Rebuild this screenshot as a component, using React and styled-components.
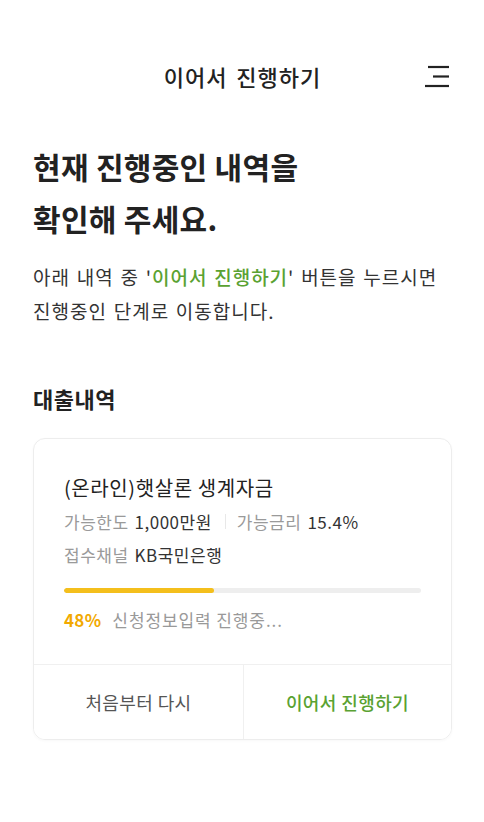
import React from "react";
import styled, { createGlobalStyle } from "styled-components";

const GlobalStyle = createGlobalStyle`
  html, body {
    margin: 0;
    padding: 0;
    background: #fff;
  }
  body {
    font-family: "Noto Sans CJK KR", "Noto Sans", sans-serif;
    color: #222;
    -webkit-font-smoothing: antialiased;
  }
`;

const Page = styled.div`
  width: 484px;
  min-height: 822px;
  box-sizing: border-box;
  padding: 48px 32px 40px 33px;
`;

const Header = styled.header`
  position: relative;
  height: 56px;
  display: flex;
  align-items: center;
  justify-content: center;
`;

const HeaderTitle = styled.h1`
  margin: 0;
  font-size: 22px;
  font-weight: 500;
  color: #222;
  letter-spacing: 1px;
  word-spacing: 3px;
`;

const MenuButton = styled.button`
  position: absolute;
  right: 1px;
  top: 16px;
  width: 28px;
  height: 28px;
  padding: 0;
  border: 0;
  background: none;
  cursor: pointer;
`;

const Heading = styled.h2`
  margin: 36px 0 0;
  font-size: 30px;
  line-height: 52px;
  font-weight: 700;
  color: #222;
  letter-spacing: 0.3px;
`;

const Lead = styled.p`
  margin: 16px 0 0;
  font-size: 19px;
  line-height: 34px;
  color: #333;
  letter-spacing: 1px;
  word-spacing: 1.5px;
`;

const Highlight = styled.span`
  color: #5aa232;
  font-weight: 500;
`;

const SectionTitle = styled.h3`
  margin: 55px 0 0;
  font-size: 22px;
  line-height: 30px;
  font-weight: 700;
  color: #222;
  letter-spacing: 0.5px;
`;

const Card = styled.section`
  margin-top: 25px;
  border: 1px solid #ededed;
  border-radius: 12px;
  box-shadow: 0 1px 3px rgba(0, 0, 0, 0.03);
  overflow: hidden;
`;

const CardBody = styled.div`
  padding: 35px 30px 31px 30px;
`;

const LoanName = styled.div`
  font-size: 20px;
  line-height: 28px;
  color: #222;
  letter-spacing: 0.6px;
  margin-bottom: 3px;
`;

const InfoRow = styled.div`
  display: flex;
  align-items: center;
  font-size: 17px;
  line-height: 33px;
  letter-spacing: 0.5px;
`;

const Label = styled.span`
  color: #9a9a9a;
  margin-right: 6px;
`;

const Value = styled.span`
  color: #333;
`;

const Sep = styled.span`
  width: 1px;
  height: 15px;
  background: #e8e8e8;
  margin: 0 11px 0 13px;
`;

const Track = styled.div`
  margin-top: 17px;
  height: 5px;
  border-radius: 3px;
  background: #eeeeee;
  overflow: hidden;
`;

const Fill = styled.div`
  height: 100%;
  border-radius: 3px;
  background: #f4bf1c;
`;

const Status = styled.div`
  margin-top: 14px;
  display: flex;
  align-items: center;
  font-size: 17px;
  line-height: 26px;
  letter-spacing: 0.9px;
`;

const Percent = styled.span`
  color: #f2a900;
  font-weight: 700;
  letter-spacing: 0.3px;
  margin-right: 11px;
`;

const StatusText = styled.span`
  color: #999;
`;

const Actions = styled.div`
  display: grid;
  grid-template-columns: 209px 1fr;
  border-top: 1px solid #f0f0f0;
`;

const ActionButton = styled.button`
  height: 74px;
  border: 0;
  background: #fff;
  font-family: inherit;
  font-size: 18px;
  letter-spacing: 0.4px;
  cursor: pointer;
  color: ${(p) => (p.primary ? "#5aa232" : "#555")};
  font-weight: ${(p) => (p.primary ? 500 : 400)};
  & + & {
    border-left: 1px solid #f0f0f0;
  }
`;

const MenuIcon = () => (
  <svg width="28" height="28" viewBox="0 0 28 28">
    <g stroke="#222" strokeWidth="2.2" strokeLinecap="butt">
      <line x1="5" y1="3" x2="26" y2="3" />
      <line x1="10" y1="12.5" x2="26" y2="12.5" />
      <line x1="2" y1="22" x2="26" y2="22" />
    </g>
  </svg>
);

const loan = {
  name: "(온라인)햇살론 생계자금",
  limit: "1,000만원",
  rate: "15.4%",
  channel: "KB국민은행",
  progress: 42,
  percentLabel: "48%",
  step: "신청정보입력 진행중...",
};

export default function App() {
  return (
    <Page>
      <GlobalStyle />
      <Header>
        <HeaderTitle>이어서 진행하기</HeaderTitle>
        <MenuButton aria-label="메뉴">
          <MenuIcon />
        </MenuButton>
      </Header>

      <Heading>
        현재 진행중인 내역을
        <br />
        확인해 주세요.
      </Heading>
      <Lead>
        아래 내역 중 '<Highlight>이어서 진행하기</Highlight>' 버튼을 누르시면
        <br />
        진행중인 단계로 이동합니다.
      </Lead>

      <SectionTitle>대출내역</SectionTitle>
      <Card>
        <CardBody>
          <LoanName>{loan.name}</LoanName>
          <InfoRow>
            <Label>가능한도</Label>
            <Value>{loan.limit}</Value>
            <Sep />
            <Label>가능금리</Label>
            <Value>{loan.rate}</Value>
          </InfoRow>
          <InfoRow>
            <Label>접수채널</Label>
            <Value>{loan.channel}</Value>
          </InfoRow>
          <Track>
            <Fill style={{ width: `${loan.progress}%` }} />
          </Track>
          <Status>
            <Percent>{loan.percentLabel}</Percent>
            <StatusText>{loan.step}</StatusText>
          </Status>
        </CardBody>
        <Actions>
          <ActionButton>처음부터 다시</ActionButton>
          <ActionButton primary>이어서 진행하기</ActionButton>
        </Actions>
      </Card>
    </Page>
  );
}
